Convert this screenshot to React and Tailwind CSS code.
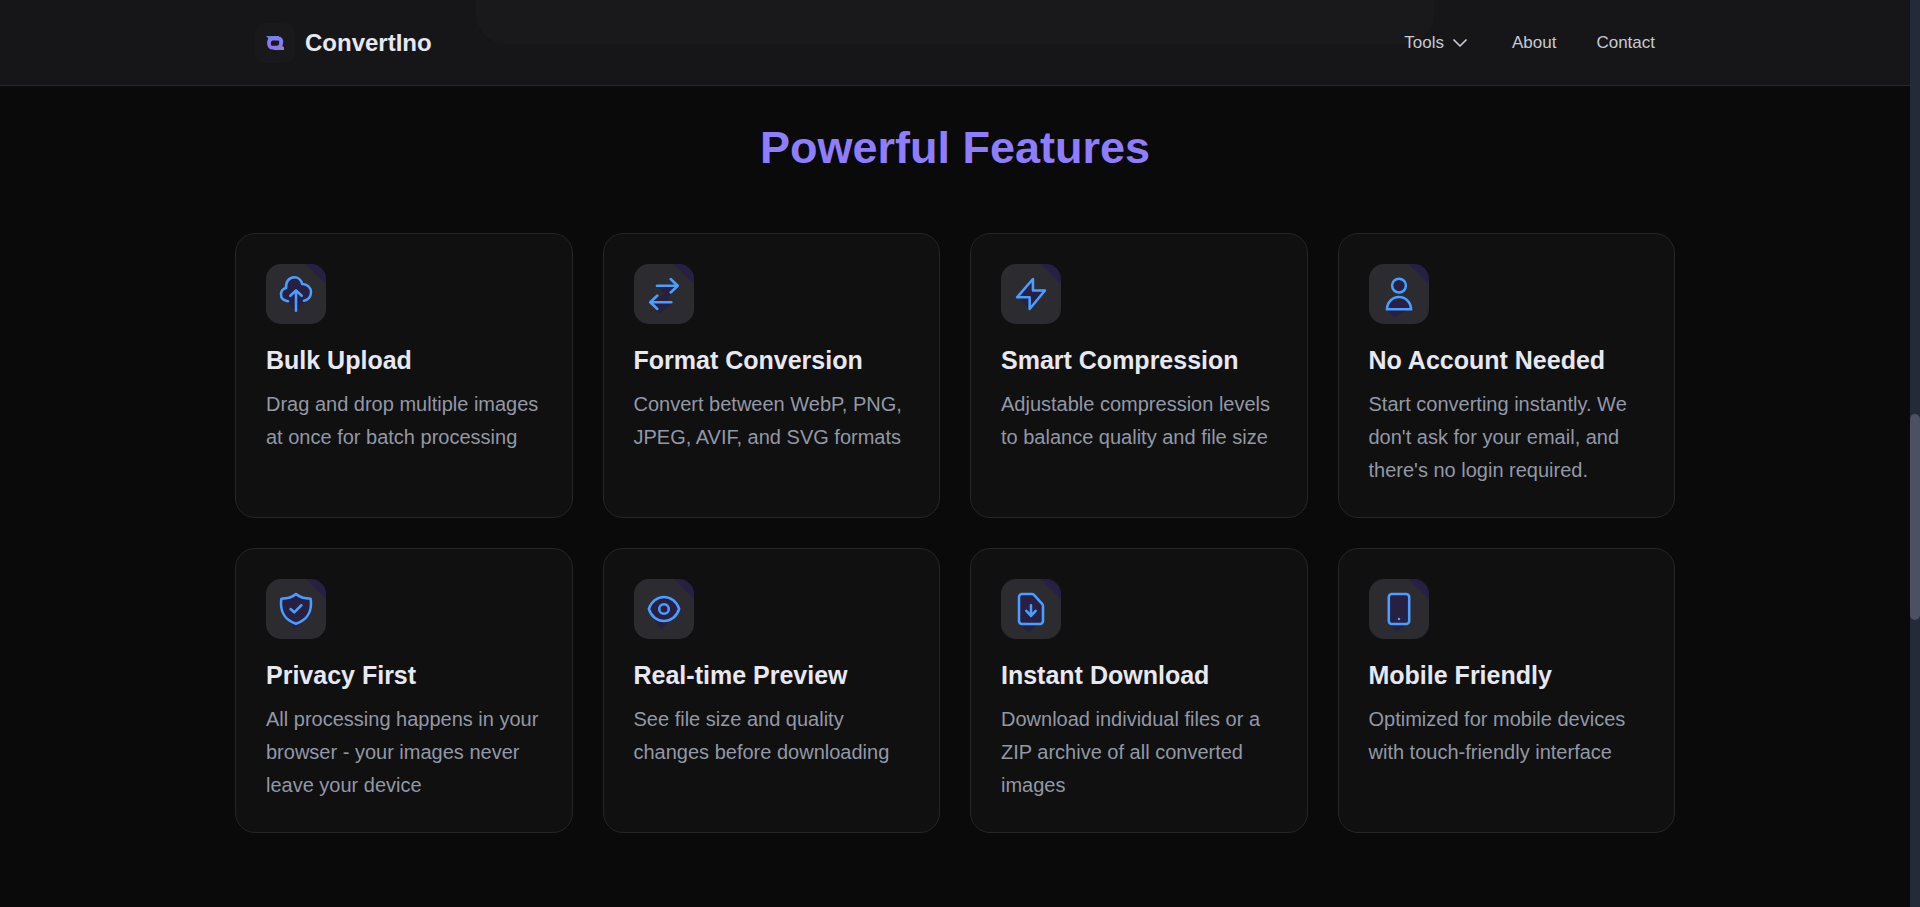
import { ChevronDown } from "lucide-react";

const TILE = "fill-[#272042]";

const features = [
    {
        title: "Bulk Upload",
        text: "Drag and drop multiple images at once for batch processing",
        icon: (
            <>
                <path d="M5 16L12 23.5L19 16Z" stroke="none" className={TILE} />
                <path d="M6.7 16.8C4 16.4 2 14.8 2 12.3C2 10 3.4 8.5 5.4 8C4.9 4 7.5 .8 10.8 .8C13.5 .8 15.6 2.7 16.1 5.3C19.5 5.3 22 7.7 22 10.9C22 13.8 20 16 17.3 16.5" className={TILE} />
                <path d="M12 23.2V9.6M8.2 13.2L12 9.6L15.8 13.2" />
            </>
        ),
    },
    {
        title: "Format Conversion",
        text: "Convert between WebP, PNG, JPEG, AVIF, and SVG formats",
        icon: (
            <>
                <path d="M8 7H20L14 16L18 18L9 25L4 18L9 14L12 12Z" stroke="none" className={TILE} />
                <path d="M7.3 6.5H21.2M16.4 2L21.2 6.5L16.4 11M16.9 17.5H2.8M7.6 13L2.8 17.5L7.6 22" />
            </>
        ),
    },
    {
        title: "Smart Compression",
        text: "Adjustable compression levels to balance quality and file size",
        icon: (
            <>
                <path d="M3 14L11 22V14Z" stroke="none" className={TILE} />
                <path d="M13.3 2V9.7H21.3L11.1 22V14.2H2.7Z" className={TILE} />
            </>
        ),
    },
    {
        title: "No Account Needed",
        text: "Start converting instantly. We don't ask for your email, and there's no login required.",
        icon: (
            <>
                <path d="M4 23H17L9 27.5Z" stroke="none" className={TILE} />
                <circle cx="12" cy="6.4" r="4.6" className={TILE} />
                <path d="M4 22.2C4 17.6 7.5 14 12 14S20 17.6 20 22.2Z" strokeLinejoin="miter" className={TILE} />
            </>
        ),
    },
    {
        title: "Privacy First",
        text: "All processing happens in your browser - your images never leave your device",
        icon: (
            <>
                <path d="M4 16L11 25.5L18 19Z" stroke="none" className={TILE} />
                <path d="M12 2C10 3.8 7 5 2.3 5.1C2 6 2 7.3 2 8.5C2 15 5.8 19.8 12 21.8C18.2 19.8 22 15 22 8.5C22 7.3 22 6 21.7 5.1C17 5 14 3.8 12 2Z" className={TILE} />
                <path d="M8.4 12L10.8 14.2L15.6 9.5" />
            </>
        ),
    },
    {
        title: "Real-time Preview",
        text: "See file size and quality changes before downloading",
        icon: (
            <>
                <path d="M3 15L10 25.5L19 17Z" stroke="none" className={TILE} />
                <path d="M1.9 12C3.4 7.2 7.4 4 12 4S20.6 7.2 22.1 12C20.6 16.8 16.6 20 12 20S3.4 16.8 1.9 12Z" className={TILE} />
                <circle cx="12" cy="12" r="3.2" />
            </>
        ),
    },
    {
        title: "Instant Download",
        text: "Download individual files or a ZIP archive of all converted images",
        icon: (
            <>
                <path d="M5 22H17L10 27.5Z" stroke="none" className={TILE} />
                <path d="M6 2H12.6C13.2 2 13.6 2.2 14 2.6L19.4 8.6C19.8 9 20 9.4 20 10V20A2 2 0 0 1 18 22H6A2 2 0 0 1 4 20V4A2 2 0 0 1 6 2Z" className={TILE} />
                <path d="M12 9.5V16.6M8.9 13.2L12 16.6L15.1 13.2" />
            </>
        ),
    },
    {
        title: "Mobile Friendly",
        text: "Optimized for mobile devices with touch-friendly interface",
        icon: (
            <>
                <path d="M6 22H17L10 27.5Z" stroke="none" className={TILE} />
                <rect x="5.2" y="2" width="13.6" height="20" rx="2" className={TILE} />
                <path d="M12 18.6V18.7" />
            </>
        ),
    },
];

function Logo() {
    return (
        <a href="#" className="flex items-center gap-[10px]">
            <span className="flex size-10 items-center justify-center rounded-[10px] bg-[#19191b]">
                <svg viewBox="0 0 18 14" className="h-[14px] w-[18px]" fill="none">
                    <path d="M0 0H13V4H4Z" fill="#4a8ee0" />
                    <path d="M18 14H7L14 9L18 11Z" fill="#8d88a8" />
                    <path d="M6.5 2.5H12C15 2.5 15.8 4.5 15.2 7.5C14.6 10.3 13 11.7 11 11.7H7C4.2 11.7 2.8 10 3 7C3.1 4.2 4.2 2.5 6.5 2.5Z" stroke="#8b78f0" strokeWidth="3.8" />
                    <path d="M11.5 3.5L14 4V8" stroke="#4a9eff" />
                </svg>
            </span>
            <span className="text-2xl font-bold text-[#e8e8f0]">ConvertIno</span>
        </a>
    );
}

function Header() {
    return (
        <header className="relative border-b border-[#29292b] bg-[#161618]">
            {/* bottom of the converter panel, seen through the bar */}
            <div className="absolute inset-x-0 top-0 mx-auto h-11 max-w-[958px] rounded-b-[30px] bg-[#19191b]" />
            <div className="relative mx-auto flex h-[85px] max-w-[1440px] items-center justify-between px-5">
                <Logo />
                <nav className="flex items-center gap-10 text-[17px] text-[#c6cad3]">
                    <button className="flex items-center gap-1">
                        Tools
                        <ChevronDown className="size-6" strokeWidth={1.75} />
                    </button>
                    <a href="#">About</a>
                    <a href="#">Contact</a>
                </nav>
            </div>
        </header>
    );
}

function FeatureCard({ title, text, icon }) {
    return (
        <div className="rounded-[20px] border border-[#262627] bg-[#101010] p-[30px]">
            <div className="mb-5 flex size-[60px] items-center justify-center rounded-[15px] bg-[#2c2b30] bg-[linear-gradient(45deg,transparent_82%,#272042_84%)]">
                <svg
                    viewBox="0 0 24 24"
                    className="size-9 overflow-visible"
                    fill="none"
                    stroke="#4a9eff"
                    strokeWidth="1.7"
                    strokeLinecap="round"
                    strokeLinejoin="round"
                >
                    {icon}
                </svg>
            </div>
            <h3 className="mb-3 text-[25px] leading-8 font-bold text-[#e8e8f0]">{title}</h3>
            <p className="text-xl leading-[33px] text-[#9298a6]">{text}</p>
        </div>
    );
}

export default function App() {
    return (
        <div className="flex min-h-screen bg-[#0a0a0a] font-['Liberation_Sans',Arial,sans-serif]">
            <div className="min-w-0 flex-1">
                <Header />
                <main className="mx-auto max-w-[1440px] pt-8 pb-[74px]">
                    <h2 className="mb-[55px] text-center text-[45px] leading-[60px] font-bold text-[#8f7dff]">
                        Powerful Features
                    </h2>
                    <div className="grid grid-cols-1 gap-[30px] sm:grid-cols-2 xl:grid-cols-4">
                        {features.map((f) => (
                            <FeatureCard key={f.title} {...f} />
                        ))}
                    </div>
                </main>
            </div>
            {/* scrollbar */}
            <div className="flex w-[10px] shrink-0 flex-col bg-[#232a38]">
                <div className="grow-[414]" />
                <div className="grow-[206] rounded-full bg-[#4b5160]" />
                <div className="grow-[287]" />
            </div>
        </div>
    );
}
